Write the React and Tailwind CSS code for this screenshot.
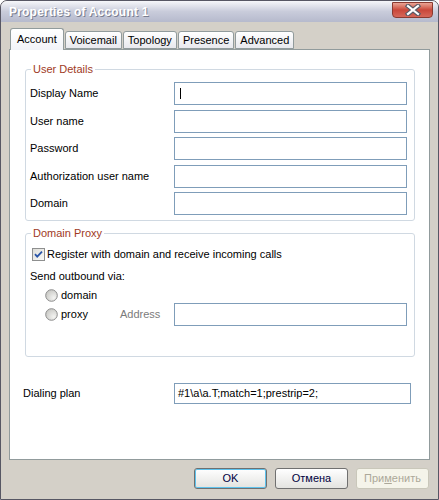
import React from 'react'

const font = { fontFamily: '"Liberation Sans", Arial, sans-serif' }

function TextBox({ children, caret, className = 'h-[23px]' }) {
  return (
    <div className={`w-[233px] ${className} border border-[#7f9db9] bg-white flex items-center pl-[3px] text-black`}>
      {caret && <span className="w-px h-[11px] bg-black ml-[2px]" />}
      {children}
    </div>
  )
}

function Tab({ label, active }) {
  if (active) {
    return (
      <div className="relative z-10 -mb-px h-[22px] px-[6px] flex items-center border border-b-0 border-[#919b9c] rounded-t-[3px] bg-gradient-to-b from-white to-[#f2f4f8] text-black">
        {label}
      </div>
    )
  }
  return (
    <div className="h-[18px] px-[4px] flex items-center border border-[#919b9c] rounded-t-[3px] bg-gradient-to-b from-white to-[#e8e9ee] text-black">
      {label}
    </div>
  )
}

function Group({ title, className, children }) {
  return (
    <fieldset className={`w-[390px] min-w-0 border border-[#d0d9e2] rounded-[3px] pl-[4px] pr-[7px] ${className}`}>
      <legend className="ml-[1px] px-[2px] leading-[13px] text-[#a03a1e]">{title}</legend>
      {children}
    </fieldset>
  )
}

function Field({ label, caret, className = '' }) {
  return (
    <div className={`flex items-center h-[23px] ${className}`}>
      <span className="w-[144px]">{label}</span>
      <TextBox caret={caret} />
    </div>
  )
}

function CheckBox() {
  return (
    <svg width="13" height="13" viewBox="0 0 13 13" className="shrink-0">
      <defs>
        <linearGradient id="cbg" x1="0" y1="0" x2="1" y2="1">
          <stop offset="0" stopColor="#dcdcd7" />
          <stop offset="1" stopColor="#fbfbf9" />
        </linearGradient>
      </defs>
      <rect x="0.5" y="0.5" width="12" height="12" fill="url(#cbg)" stroke="#8e8f8f" />
      <path d="M3 6.2 L5.2 8.6 L10 3.6" fill="none" stroke="#2a55a8" strokeWidth="1.8" />
    </svg>
  )
}

function Radio() {
  return (
    <svg width="13" height="13" viewBox="0 0 13 13" className="shrink-0">
      <defs>
        <radialGradient id="rdg" cx="0.7" cy="0.7" r="0.8">
          <stop offset="0" stopColor="#f4f4f2" />
          <stop offset="1" stopColor="#c6c6c2" />
        </radialGradient>
      </defs>
      <circle cx="6.5" cy="6.5" r="5.8" fill="url(#rdg)" stroke="#8c8c8c" strokeWidth="1" />
    </svg>
  )
}

function Button({ children, variant }) {
  if (variant === 'disabled') {
    return (
      <div className="w-[73px] h-[21px] flex items-center justify-center rounded-[3px] border border-[#c9c7ba] bg-[#f5f4ea] text-[#aca899]">
        {children}
      </div>
    )
  }
  return (
    <div
      className={`w-[73px] h-[21px] flex items-center justify-center rounded-[3px] border border-[#707070] bg-gradient-to-b from-white to-[#e3e3e0] text-[#000040] ${
        variant === 'default' ? 'shadow-[inset_0_0_0_1px_#5ec2ec]' : ''
      }`}
    >
      {children}
    </div>
  )
}

export default function App() {
  return (
    <div style={font} className="w-[439px] h-[500px] text-[11px] text-black">
      <div className="w-full h-full flex flex-col border border-[#575764] rounded-t-[7px] bg-[#d4d0c8] overflow-hidden">
        {/* title bar */}
        <div className="h-[21px] shrink-0 flex items-center justify-between bg-gradient-to-b from-[#f6f7fa] via-[#c9ccdb] to-[#b6bacd] pl-[8px] pr-[5px]">
          <span className="text-white font-bold text-[12px] tracking-[0.2px] [text-shadow:1px_1px_0_#7a7e90]">
            Properties of Account 1
          </span>
          <div className="w-[41px] h-[16px] -mt-[3px] rounded-b-[4px] border border-[#8a3a30] bg-gradient-to-b from-[#e9a395] via-[#c9473a] to-[#d6675a] flex items-center justify-center">
            <svg width="16" height="12" viewBox="0 0 16 12">
              <path d="M3 2 L13 10 M13 2 L3 10" stroke="#5a5a66" strokeWidth="4.5" strokeLinecap="square" />
              <path d="M3 2 L13 10 M13 2 L3 10" stroke="#ffffff" strokeWidth="2.2" strokeLinecap="square" />
            </svg>
          </div>
        </div>

        {/* body */}
        <div className="flex-1 flex flex-col px-[8px] pt-[6px]">
          <div className="flex items-end pl-[1px] gap-px">
            <Tab label="Account" active />
            <Tab label="Voicemail" />
            <Tab label="Topology" />
            <Tab label="Presence" />
            <Tab label="Advanced" />
          </div>

          <div className="w-[421px] h-[411px] border border-[#919b9c] bg-white">
            <Group title="User Details" className="mt-[13px] ml-[15px] pb-[5px]">
              <Field label="Display Name" caret className="mt-[6px]" />
              <Field label="User name" className="mt-[5px]" />
              <Field label="Password" className="mt-[4px]" />
              <Field label="Authorization user name" className="mt-[5px]" />
              <Field label="Domain" className="mt-[4px]" />
            </Group>

            <Group title="Domain Proxy" className="mt-[6px] ml-[15px] pb-[30px]">
              <div className="flex items-center h-[13px] mt-[8px] ml-[2px] gap-[2px]">
                <CheckBox />
                <span>Register with domain and receive incoming calls</span>
              </div>
              <div className="flex items-center h-[13px] mt-[9px]">Send outbound via:</div>
              <div className="flex items-center h-[13px] mt-[6px] ml-[15px] gap-[3px]">
                <Radio />
                <span>domain</span>
              </div>
              <div className="flex items-center h-[23px] mt-px">
                <div className="w-[75px] flex items-center ml-[15px] gap-[3px]">
                  <Radio />
                  <span>proxy</span>
                </div>
                <span className="w-[54px] text-[#7b7b7b]">Address</span>
                <TextBox />
              </div>
            </Group>

            <div className="flex items-center h-[21px] mt-[26px] pl-[13px]">
              <span className="w-[151px]">Dialing plan</span>
              <TextBox className="h-[21px] w-[237px]">#1\a\a.T;match=1;prestrip=2;</TextBox>
            </div>
          </div>

          <div className="flex justify-end gap-[8px] mt-[8px] mr-[1px]">
            <Button variant="default">OK</Button>
            <Button>Отмена</Button>
            <Button variant="disabled">
              При<span className="underline">м</span>енить
            </Button>
          </div>
        </div>
      </div>
    </div>
  )
}
